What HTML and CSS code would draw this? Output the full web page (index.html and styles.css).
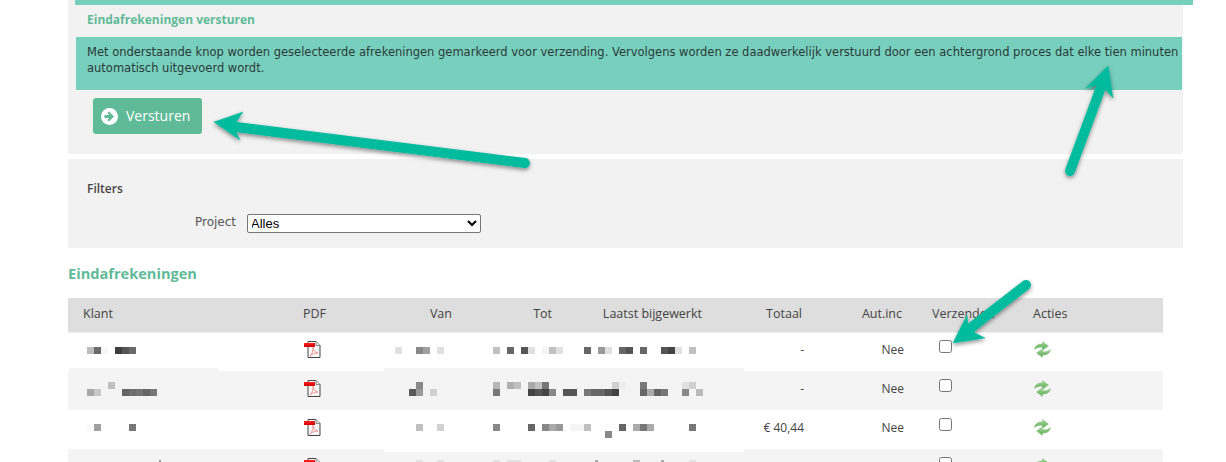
FILE: index.html
```html
<!DOCTYPE html>
<html lang="nl">
<head>
    <meta charset="UTF-8">
    <meta name="viewport" content="width=device-width, initial-scale=1.0">
    <title>Eindafrekeningen</title>
    <link rel="stylesheet" href="styles.css">
</head>
<body>
    <div class="page">
        <section class="panel send-panel">
            <div class="top-band"></div>
            <h3 class="panel-title">Eindafrekeningen versturen</h3>
            <div class="alert">Met onderstaande knop worden geselecteerde afrekeningen gemarkeerd voor verzending. Vervolgens worden ze daadwerkelijk verstuurd door een achtergrond proces dat elke tien minuten automatisch uitgevoerd wordt.</div>
            <button class="btn-send" type="button">
                <svg class="btn-icon" viewBox="0 0 17 17" width="17" height="17">
                    <circle cx="8.5" cy="8.5" r="8.5" fill="#fff"/>
                    <path d="M3.500 7h4.700L6.400 5 8 3.500l5 5-5 5L6.400 12l1.800-2H3.500z" fill="#5fba97"/>
                </svg>
                <span class="btn-label">Versturen</span>
            </button>
        </section>

        <section class="panel filter-panel">
            <h4 class="filter-title">Filters</h4>
            <div class="filter-row">
                <label class="filter-label" for="project">Project</label>
                <select id="project" class="filter-select">
                    <option>Alles</option>
                </select>
            </div>
        </section>

        <h2 class="list-title">Eindafrekeningen</h2>

        <table class="list">
            <colgroup>
                <col class="c-klant"><col class="c-pdf"><col class="c-van"><col class="c-tot"><col class="c-laatst">
                <col class="c-totaal"><col class="c-aut"><col class="c-verz"><col class="c-acties">
            </colgroup>
            <thead>
                <tr>
                    <th>Klant</th>
                    <th>PDF</th>
                    <th class="num">Van</th>
                    <th class="num">Tot</th>
                    <th class="num">Laatst bijgewerkt</th>
                    <th class="num">Totaal</th>
                    <th class="num">Aut.inc</th>
                    <th>Verzenden</th>
                    <th>Acties</th>
                </tr>
            </thead>
            <tbody>
                <tr>
                    <td></td>
                    <td class="icon-cell"><svg class="ic" width="17" height="17"><use href="#pdf"/></svg></td>
                    <td></td><td></td><td></td>
                    <td class="num">-</td>
                    <td class="num">Nee</td>
                    <td class="check-cell"><input type="checkbox"></td>
                    <td class="icon-cell"><svg class="ic" width="17" height="17"><use href="#refresh"/></svg></td>
                </tr>
                <tr>
                    <td></td>
                    <td class="icon-cell"><svg class="ic" width="17" height="17"><use href="#pdf"/></svg></td>
                    <td></td><td></td><td></td>
                    <td class="num">-</td>
                    <td class="num">Nee</td>
                    <td class="check-cell"><input type="checkbox"></td>
                    <td class="icon-cell"><svg class="ic" width="17" height="17"><use href="#refresh"/></svg></td>
                </tr>
                <tr>
                    <td></td>
                    <td class="icon-cell"><svg class="ic" width="17" height="17"><use href="#pdf"/></svg></td>
                    <td></td><td></td><td></td>
                    <td class="num">€ 40,44</td>
                    <td class="num">Nee</td>
                    <td class="check-cell"><input type="checkbox"></td>
                    <td class="icon-cell"><svg class="ic" width="17" height="17"><use href="#refresh"/></svg></td>
                </tr>
                <tr>
                    <td></td>
                    <td class="icon-cell"><svg class="ic" width="17" height="17"><use href="#pdf"/></svg></td>
                    <td></td><td></td><td></td>
                    <td class="num"></td>
                    <td class="num"></td>
                    <td class="check-cell"><input type="checkbox"></td>
                    <td class="icon-cell"><svg class="ic" width="17" height="17"><use href="#refresh"/></svg></td>
                </tr>
            </tbody>
        </table>
    </div>

    <!-- icon sprites -->
    <svg class="sprites" width="0" height="0">
        <defs>
            <linearGradient id="red" x1="0" y1="0" x2="0" y2="1">
                <stop offset="0" stop-color="#f22"/>
                <stop offset="1" stop-color="#c00"/>
            </linearGradient>
            <linearGradient id="grn" x1="0" y1="0" x2="0" y2="1">
                <stop offset="0" stop-color="#a6d89c"/>
                <stop offset="1" stop-color="#5aa854"/>
            </linearGradient>
            <symbol id="pdf" viewBox="0 0 17 17">
                <path d="M4 .5h8l4 4v12H4z" fill="#f6f6f6" stroke="#444" stroke-width="1"/>
                <path d="M12 .5v4h4" fill="#e2e2e2" stroke="#888" stroke-width="1"/>
                <rect x="0" y="2" width="11" height="4" fill="url(#red)"/>
                <path d="M6 15c2-1.500 3.200-5 3-8.500.5 3 2.500 5.500 5 5.500-3 0-6 1-8 3z" fill="none" stroke="#ef7f78" stroke-width=".8"/>
            </symbol>
            <symbol id="refresh" viewBox="0 0 17 17">
                <path d="M.5 8.500C1 4.500 4.500 2.500 8.500 3V.5l6 4.500-6 4.300V6.500C5.500 6 3 6.500.5 8.500z" fill="url(#grn)" stroke="#7fba76" stroke-width=".4"/>
                <path d="M16.500 8.500c-.5 4-4 6-8 5.500v2.500l-6-4.500 6-4.300V10.500c3 .5 5.500 0 8-2z" fill="url(#grn)" stroke="#7fba76" stroke-width=".4"/>
            </symbol>
        </defs>
    </svg>

    <!-- blurred customer data, placed over the table -->
    <svg class="overlay" width="1226" height="462" shape-rendering="crispEdges">
        <g fill="#f4f4f4">
            <rect x="69" y="368" width="150" height="3"/>
            <rect x="384" y="368" width="360" height="3"/>
        </g>
        <rect x="384" y="449" width="360" height="3" fill="#fff"/>

        <g id="row1">
            <rect x="87" y="347" width="7" height="7" fill="#bbb"/><rect x="94" y="347" width="7" height="7" fill="#6a6a6a"/><rect x="101" y="347" width="7" height="7" fill="#f6f6f6"/>
            <rect x="115" y="347" width="7" height="7" fill="#3f3f3f"/><rect x="122" y="347" width="7" height="7" fill="#555"/><rect x="129" y="347" width="7" height="7" fill="#6a6a6a"/>
            <rect x="395" y="347" width="7" height="7" fill="#e0e0e0"/><rect x="416" y="347" width="7" height="7" fill="#888"/><rect x="423" y="347" width="7" height="7" fill="#a0a0a0"/><rect x="437" y="347" width="7" height="7" fill="#e0e0e0"/>
            <rect x="493" y="347" width="7" height="7" fill="#c0c0c0"/><rect x="507" y="347" width="7" height="7" fill="#666"/><rect x="521" y="347" width="7" height="7" fill="#555"/><rect x="528" y="347" width="7" height="7" fill="#e0e0e0"/>
            <rect x="542" y="347" width="7" height="7" fill="#f5f5f5"/><rect x="549" y="347" width="7" height="7" fill="#c0c0c0"/><rect x="556" y="347" width="7" height="7" fill="#e0e0e0"/>
            <rect x="584" y="347" width="7" height="7" fill="#666"/><rect x="598" y="347" width="7" height="7" fill="#999"/><rect x="605" y="347" width="7" height="7" fill="#e0e0e0"/>
            <rect x="619" y="347" width="7" height="7" fill="#666"/><rect x="626" y="347" width="7" height="7" fill="#555"/><rect x="640" y="347" width="7" height="7" fill="#666"/>
            <rect x="661" y="347" width="7" height="7" fill="#555"/><rect x="668" y="347" width="7" height="7" fill="#444"/><rect x="675" y="347" width="7" height="7" fill="#e0e0e0"/><rect x="689" y="347" width="7" height="7" fill="#c0c0c0"/>
        </g>
        <g id="row2">
            <rect x="108" y="382" width="7" height="7" fill="#c0c0c0"/>
            <rect x="87" y="389" width="7" height="7" fill="#a8a8a8"/><rect x="94" y="389" width="7" height="7" fill="#c8c8c8"/>
            <rect x="122" y="389" width="7" height="7" fill="#666"/><rect x="129" y="389" width="7" height="7" fill="#6e6e6e"/><rect x="136" y="389" width="7" height="7" fill="#737373"/><rect x="143" y="389" width="7" height="7" fill="#666"/><rect x="150" y="389" width="7" height="7" fill="#777"/>
            <rect x="416" y="382" width="7" height="7" fill="#888"/><rect x="409" y="389" width="7" height="7" fill="#5a5a5a"/><rect x="416" y="389" width="7" height="7" fill="#999"/><rect x="430" y="389" width="7" height="7" fill="#d0d0d0"/>
            <rect x="493" y="382" width="7" height="7" fill="#b8b8b8"/><rect x="507" y="382" width="7" height="7" fill="#b0b0b0"/><rect x="514" y="382" width="7" height="7" fill="#c0c0c0"/>
            <rect x="528" y="382" width="7" height="7" fill="#aaa"/><rect x="535" y="382" width="7" height="7" fill="#c0c0c0"/><rect x="542" y="382" width="7" height="7" fill="#777"/>
            <rect x="612" y="382" width="7" height="7" fill="#d0d0d0"/><rect x="619" y="382" width="7" height="7" fill="#eee"/><rect x="640" y="382" width="7" height="7" fill="#777"/>
            <rect x="682" y="382" width="7" height="7" fill="#e0e0e0"/><rect x="689" y="382" width="7" height="7" fill="#d0d0d0"/>
            <rect x="493" y="389" width="7" height="7" fill="#777"/><rect x="528" y="389" width="7" height="7" fill="#444"/><rect x="535" y="389" width="7" height="7" fill="#555"/><rect x="542" y="389" width="7" height="7" fill="#444"/><rect x="549" y="389" width="7" height="7" fill="#888"/>
            <rect x="563" y="389" width="14" height="7" fill="#555"/><rect x="584" y="389" width="7" height="7" fill="#777"/><rect x="591" y="389" width="14" height="7" fill="#666"/><rect x="605" y="389" width="7" height="7" fill="#555"/><rect x="612" y="389" width="7" height="7" fill="#444"/>
            <rect x="640" y="389" width="7" height="7" fill="#666"/><rect x="647" y="389" width="7" height="7" fill="#aaa"/><rect x="654" y="389" width="7" height="7" fill="#666"/><rect x="661" y="389" width="7" height="7" fill="#777"/>
            <rect x="682" y="389" width="7" height="7" fill="#888"/><rect x="696" y="389" width="7" height="7" fill="#bbb"/>
        </g>
        <g id="row3">
            <rect x="87" y="424" width="7" height="7" fill="#f8f8f8"/><rect x="94" y="424" width="7" height="7" fill="#a0a0a0"/><rect x="129" y="424" width="7" height="7" fill="#777"/>
            <rect x="416" y="424" width="7" height="7" fill="#c0c0c0"/><rect x="437" y="424" width="7" height="7" fill="#d0d0d0"/>
            <rect x="493" y="424" width="7" height="7" fill="#888"/><rect x="528" y="424" width="7" height="7" fill="#666"/><rect x="542" y="424" width="7" height="7" fill="#888"/><rect x="549" y="424" width="7" height="7" fill="#aaa"/><rect x="556" y="424" width="7" height="7" fill="#999"/>
            <rect x="570" y="424" width="14" height="7" fill="#f5f5f5"/><rect x="584" y="424" width="7" height="7" fill="#c0c0c0"/><rect x="605" y="431" width="7" height="7" fill="#888"/>
            <rect x="619" y="424" width="7" height="7" fill="#666"/><rect x="633" y="424" width="7" height="7" fill="#aaa"/><rect x="640" y="424" width="7" height="7" fill="#777"/><rect x="647" y="424" width="7" height="7" fill="#aaa"/><rect x="689" y="424" width="7" height="7" fill="#777"/>
        </g>
        <g id="row4" fill="#e2e2e2">
            <rect x="159" y="460" width="2" height="2" fill="#999"/>
            <rect x="416" y="460" width="7" height="2"/><rect x="437" y="460" width="7" height="2"/>
            <rect x="493" y="460" width="7" height="2"/><rect x="507" y="460" width="14" height="2"/><rect x="549" y="460" width="7" height="2"/>
            <rect x="595" y="460" width="3" height="2" fill="#aaa"/><rect x="633" y="460" width="7" height="2" fill="#bbb"/><rect x="661" y="460" width="3" height="2" fill="#aaa"/><rect x="689" y="460" width="7" height="2"/>
        </g>
    </svg>

    <!-- annotation arrows -->
    <svg class="overlay" width="1226" height="462">
        <defs>
            <filter id="arrow-shadow" x="-20%" y="-20%" width="140%" height="140%">
                <feDropShadow dx="0" dy="2" stdDeviation="2" flood-color="#000" flood-opacity=".45"/>
            </filter>
        </defs>
        <g fill="#00bb9e" stroke="#00bb9e" stroke-linejoin="round" filter="url(#arrow-shadow)">
            <path d="M525 163 236 127" stroke-width="10" stroke-linecap="round"/>
            <path d="M214 122 243 112 236 122 236 132 240 140z" stroke-width=".5"/>
            <path d="M1070 171 1100 90" stroke-width="10" stroke-linecap="round"/>
            <path d="M1108 66 1086 88 1096 85 1105 89 1113 98z" stroke-width=".5"/>
            <path d="M1026 285 972 327" stroke-width="10" stroke-linecap="round"/>
            <path d="M953 343 967 315 968 325 975 333 985 338z" stroke-width=".5"/>
        </g>
    </svg>
</body>
</html>
```

FILE: styles.css
```css
html, body {
    height: 462px;
    margin: 0;
    overflow: hidden;
    background: #fff;
}
body {
    position: relative;
    font-family: 'Open Sans', sans-serif;
    font-size: 12px;
    color: #444;
}
.page {
    width: 1115px;
    margin-left: 68px;
}
.panel {
    background: #f2f2f2;
}
.send-panel {
    height: 154px;
    margin-bottom: 5px;
}
.top-band {
    width: 1118px;
    height: 5px;
    margin-left: 7px;
    background: #77cfbe;
}
.panel-title {
    margin: 0;
    padding: 6px 0 0 19px;
    height: 26px;
    font-size: 12px;
    line-height: 17px;
    color: #5fba97;
}
.alert {
    width: 1106px;
    height: 53px;
    margin-left: 8px;
    padding: 7px 0 0 11px;
    box-sizing: border-box;
    background: #77cfbe;
    color: #2b3a38;
    font-family: 'DejaVu Sans', sans-serif;
    font-size: 11.5px;
    line-height: 16px;
}
.btn-send {
    display: flex;
    align-items: center;
    gap: 8px;
    width: 109px;
    height: 36px;
    margin: 8px 0 0 25px;
    padding: 0 0 0 8px;
    border: none;
    border-radius: 3px;
    background: #5fba97;
    color: #fff;
    font-family: 'Open Sans', sans-serif;
    font-size: 14px;
}
.btn-icon {
    flex: none;
}
.btn-label {
    position: relative;
    top: -1px;
}
.filter-panel {
    height: 89px;
    padding: 21px 0 0 19px;
    box-sizing: border-box;
}
.filter-title {
    margin: 0;
    font-size: 12px;
    line-height: 17px;
    font-weight: 600;
    color: #444;
}
.filter-row {
    display: flex;
    align-items: center;
    gap: 11px;
    margin-top: 17px;
}
.filter-label {
    width: 149px;
    text-align: right;
    font-family: 'DejaVu Sans', sans-serif;
    color: #555;
    position: relative;
    top: -2px;
}
.filter-select {
    width: 234px;
    height: 19px;
    padding: 0;
    font-family: 'Liberation Sans', sans-serif;
    font-size: 13px;
    background: #fff;
    border: 1px solid #767676;
    border-radius: 2px;
    color: #000;
    text-indent: -1px;
}
.list-title {
    margin: 0;
    padding-top: 15px;
    height: 50px;
    box-sizing: border-box;
    font-size: 14.6px;
    line-height: 20px;
    color: #5fba97;
}
.list {
    width: 1095px;
    table-layout: fixed;
    border-collapse: collapse;
}
.c-klant { width: 220px; }
.c-pdf { width: 100px; }
.c-van { width: 79px; }
.c-tot { width: 100px; }
.c-laatst { width: 150px; }
.c-totaal { width: 100px; }
.c-aut { width: 100px; }
.c-verz { width: 101px; }
.c-acties { width: 145px; }
.list th {
    height: 34px;
    padding: 0 15px 2px;
    box-sizing: border-box;
    background: #dedede;
    border-bottom: 1px solid #eee;
    font-size: 12.5px;
    font-weight: 400;
    text-align: left;
    white-space: nowrap;
    color: #444;
}
.list th.num {
    text-align: right;
}
.list td {
    height: 39px;
    padding: 0;
    vertical-align: middle;
}
.list tbody tr:first-child td {
    height: 38px;
}
.list tbody tr:nth-child(even) td {
    background: #f4f4f4;
}
.list td.num {
    text-align: right;
    padding-right: 13px;
    padding-bottom: 4px;
    box-sizing: border-box;
}
.list td.icon-cell {
    padding: 0 0 4px 16px;
    box-sizing: border-box;
}
.ic {
    display: block;
}
.check-cell input {
    display: block;
    width: 13px;
    height: 13px;
    margin: -10px 0 0 22px;
}
.sprites {
    position: absolute;
}
.overlay {
    position: absolute;
    left: 0;
    top: 0;
    pointer-events: none;
}
```
